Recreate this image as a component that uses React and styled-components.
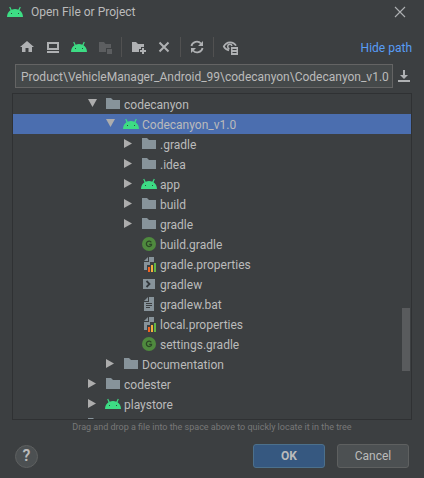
import React, { useState } from "react";
import styled, { createGlobalStyle } from "styled-components";

const Global = createGlobalStyle`
  *, *::before, *::after { box-sizing: border-box; }
  html, body { margin: 0; height: 100%; background: #3c3f41; }
  #root { height: 100%; }
  body, button, input { font-family: Roboto, "Noto Sans", sans-serif; font-size: 12px; }
`;

const Dialog = styled.main`
  display: flex;
  flex-direction: column;
  height: 100vh;
  color: #bbbbbb;
  background: #3c3f41;
  line-height: 20px;
  overflow: hidden;
`;

const TitleBar = styled.header`
  display: flex;
  align-items: center;
  gap: 8px;
  flex: none;
  height: 24px;
  padding: 0 16px 0 7px;
`;

const Title = styled.h1`
  flex: 1;
  margin: 0;
  font-size: 12px;
  font-weight: 400;
`;

const IconButton = styled.button`
  display: flex;
  align-items: center;
  justify-content: center;
  width: ${(p) => (p.$compact ? "16px" : "26px")};
  height: ${(p) => (p.$compact ? "16px" : "26px")};
  flex: none;
  padding: 0;
  border: 0;
  background: none;
  color: #afb1b3;
  &:disabled { color: #5c5e60; }
`;

const Toolbar = styled.div`
  display: flex;
  align-items: center;
  flex: none;
  height: 40px;
  padding: 6px 12px 0 14px;
`;

const Separator = styled.span`
  width: 1px;
  height: 20px;
  margin: 0 3px;
  background: #515151;
`;

const PathLink = styled.a`
  margin-left: auto;
  padding-top: 2px;
  color: #589df6;
  text-decoration: none;
`;

const PathRow = styled.div`
  display: flex;
  align-items: center;
  gap: 3px;
  flex: none;
  padding: 0 12px 0 15px;
`;

const PathInput = styled.input`
  flex: 1;
  min-width: 0;
  height: 24px;
  padding: 1px 2px 0 5px;
  border: 1px solid #646464;
  background: #45494a;
  color: #bbbbbb;
  outline: none;
`;

const TreePanel = styled.section`
  position: relative;
  flex: 1;
  min-height: 0;
  margin: 5px 12px 0;
  border: 1px solid #2f3133;
  overflow: hidden;
`;

const TreeList = styled.ul`
  margin: 0;
  padding: 0;
  list-style: none;
`;

const TreeRow = styled.li`
  display: flex;
  align-items: center;
  height: 20px;
  padding-left: ${(p) => 74 + p.$level * 18}px;
  background: ${(p) => (p.$selected ? "#4b6eaf" : "transparent")};
  white-space: nowrap;
`;

const ArrowSlot = styled.span`
  display: flex;
  align-items: center;
  width: 18px;
  height: 16px;
`;

const RowLabel = styled.span`
  margin-left: 3px;
  padding-top: 2px;
`;

const ScrollThumb = styled.div`
  position: absolute;
  right: 1px;
  bottom: 48px;
  width: 8px;
  height: 63px;
  background: #595b5d;
`;

const Hint = styled.p`
  flex: none;
  margin: 0;
  color: #787878;
  font-size: 9px;
  line-height: 14px;
  text-align: center;
`;

const Footer = styled.footer`
  display: flex;
  align-items: center;
  gap: 12px;
  flex: none;
  padding: 10px 15px;
`;

const HelpButton = styled.button`
  width: 23px;
  height: 23px;
  margin-right: auto;
  padding: 0;
  border: 1px solid #5e6060;
  border-radius: 50%;
  background: #4c5052;
  color: #bbbbbb;
  font-size: 16px;
  font-weight: 600;
  line-height: 20px;
`;

const ActionButton = styled.button`
  width: 72px;
  height: 24px;
  padding: 0;
  border: 1px solid ${(p) => (p.$primary ? "#4c708c" : "#5e6060")};
  border-radius: 3px;
  background: ${(p) => (p.$primary ? "#365880" : "#4c5052")};
  color: #bbbbbb;
  font-weight: ${(p) => (p.$primary ? 700 : 400)};
`;

const Icon = ({ children }) => (
  <svg width="16" height="16" viewBox="0 0 16 16" fill="currentColor" aria-hidden="true">
    {children}
  </svg>
);

const AndroidIcon = () => (
  <Icon>
    <path fill="#3ddc84" d="M0 13c.1-3 1.300-5.300 3.500-6.700L2.200 3.300l1-.5L4.700 5.700c2-.9 4.600-.9 6.600 0l1.500-2.900 1 .5-1.300 3C14.700 7.700 15.900 10 16 13z" />
    <path fill="#2c4a3b" d="M4 9h1v1H4zM11 9h1v1h-1z" />
  </Icon>
);

const FolderIcon = () => (
  <Icon>
    <path fill="#87939a" d="M1 2h5l2 2h7v9H1z" />
  </Icon>
);

const GradleIcon = () => (
  <Icon>
    <circle cx="8" cy="8" r="7" fill="#4f8a3e" />
    <path fill="none" stroke="#2b4526" strokeWidth="1.300" d="M10.300 6.300A2.700 2.700 0 1 0 10.500 9V8.300H8.200" />
  </Icon>
);

const PropertiesIcon = () => (
  <Icon>
    <path fill="#87939a" d="M8 1h5v5h-4v3H6v5H3V6h5z" />
    <path fill="#87939a" d="M7 1v4H3z" />
    <path fill="#f26522" d="M7 11h2v5H7z" />
    <path fill="#f4af3d" d="M10 9h2v7h-2z" />
    <path fill="#62b543" d="M13 7h2v9h-2z" />
  </Icon>
);

const ScriptIcon = () => (
  <Icon>
    <path fill="#87939a" d="M2 3h12v10H2z" />
    <path fill="none" stroke="#33383c" strokeWidth="1.800" d="M5.500 5l3 3-3 3" />
  </Icon>
);

const TextIcon = () => (
  <Icon>
    <path fill="#87939a" d="M8 1h5v14H3V6h5zM7 1v4H3z" />
    <path fill="#3c3f41" d="M5 7h6v1H5zM5 9h6v1H5zM5 11h4v1H5z" />
  </Icon>
);

const HomeIcon = () => (
  <Icon>
    <path d="M8 2l7 6h-2v5H9.500V9h-3v4H3V8H1z" />
  </Icon>
);

const DesktopIcon = () => (
  <Icon>
    <path fillRule="evenodd" d="M2 3h12v8H2zM4 5v4h8V5zM2 12h12v2H2z" />
  </Icon>
);

const ModuleIcon = () => (
  <Icon>
    <path d="M2 3h5l1.500 2H14v4H9v4H2zM10 10h5v5h-5z" />
  </Icon>
);

const NewFolderIcon = () => (
  <Icon>
    <path d="M2 3h4l2 2h6v3h-3v2H9v3H2zM12 9h2v2h2v2h-2v2h-2v-2h-2v-2h2z" />
  </Icon>
);

const DeleteIcon = () => (
  <Icon>
    <path fill="none" stroke="currentColor" strokeWidth="2" d="M3.500 3.500l9 9M12.500 3.500l-9 9" />
  </Icon>
);

const RefreshIcon = () => (
  <Icon>
    <path fill="none" stroke="currentColor" strokeWidth="1.800" d="M13.600 9A5.600 5.600 0 0 1 4 11.500M2.400 7A5.600 5.600 0 0 1 12 4.500" />
    <path d="M2 14V9h5zM14 2v5H9z" />
  </Icon>
);

const ShowHiddenIcon = () => (
  <Icon>
    <path fill="none" stroke="currentColor" strokeWidth="1.800" d="M7 11.300C4.500 10.800 2.500 9.300 1.800 7.500 3 5 5.300 3.300 8 3.300s5 1.500 6 3.400" />
    <path fill="none" stroke="currentColor" strokeWidth="1.500" d="M7.500 9.700a2.200 2.200 0 1 1 2.500-2.700" />
    <path fillRule="evenodd" d="M9 8h7v8H9zM10.500 10v1h4v-1zM10.500 13v1h4v-1z" />
  </Icon>
);

const CloseIcon = () => (
  <Icon>
    <path fill="none" stroke="currentColor" strokeWidth="1.100" d="M3 3l10 10M13 3L3 13" />
  </Icon>
);

const HistoryIcon = () => (
  <Icon>
    <path d="M7 2h2v5h3l-4 4-4-4h3zM2 12h12v2H2z" />
  </Icon>
);

const Arrow = ({ open }) => (
  <Icon>
    <path fill="#adadad" d={open ? "M1 3h9l-4.500 8z" : "M1 3l8 4.500L1 12z"} />
  </Icon>
);

const icons = {
  folder: FolderIcon,
  android: AndroidIcon,
  gradle: GradleIcon,
  properties: PropertiesIcon,
  script: ScriptIcon,
  text: TextIcon,
};

const rows = [
  { name: "codecanyon", level: 0, icon: "folder", open: true },
  { name: "Codecanyon_v1.0", level: 1, icon: "android", open: true, selected: true },
  { name: ".gradle", level: 2, icon: "folder", open: false },
  { name: ".idea", level: 2, icon: "folder", open: false },
  { name: "app", level: 2, icon: "android", open: false },
  { name: "build", level: 2, icon: "folder", open: false },
  { name: "gradle", level: 2, icon: "folder", open: false },
  { name: "build.gradle", level: 2, icon: "gradle" },
  { name: "gradle.properties", level: 2, icon: "properties" },
  { name: "gradlew", level: 2, icon: "script" },
  { name: "gradlew.bat", level: 2, icon: "text" },
  { name: "local.properties", level: 2, icon: "properties" },
  { name: "settings.gradle", level: 2, icon: "gradle" },
  { name: "Documentation", level: 1, icon: "folder", open: false },
  { name: "codester", level: 0, icon: "folder", open: false },
  { name: "playstore", level: 0, icon: "android", open: false },
  { name: "", level: -1, icon: "folder" },
];

const FileRow = ({ row }) => {
  const Glyph = icons[row.icon];
  return (
    <TreeRow
      role="treeitem"
      aria-level={row.level + 2}
      aria-expanded={row.open}
      aria-selected={Boolean(row.selected)}
      $level={row.level}
      $selected={row.selected}
    >
      <ArrowSlot>{row.open !== undefined && <Arrow open={row.open} />}</ArrowSlot>
      <Glyph />
      <RowLabel>{row.name}</RowLabel>
    </TreeRow>
  );
};

export default function App() {
  const [path, setPath] = useState("Product\\VehicleManager_Android_99\\codecanyon\\Codecanyon_v1.0");
  return (
    <>
      <Global />
      <Dialog>
        <TitleBar>
          <AndroidIcon />
          <Title>Open File or Project</Title>
          <IconButton $compact aria-label="Close"><CloseIcon /></IconButton>
        </TitleBar>
        <Toolbar>
          <IconButton aria-label="Home"><HomeIcon /></IconButton>
          <IconButton aria-label="Desktop"><DesktopIcon /></IconButton>
          <IconButton aria-label="Android projects"><AndroidIcon /></IconButton>
          <IconButton aria-label="Module directory" disabled><ModuleIcon /></IconButton>
          <Separator />
          <IconButton aria-label="New folder"><NewFolderIcon /></IconButton>
          <IconButton aria-label="Delete"><DeleteIcon /></IconButton>
          <Separator />
          <IconButton aria-label="Refresh"><RefreshIcon /></IconButton>
          <Separator />
          <IconButton aria-label="Show hidden files"><ShowHiddenIcon /></IconButton>
          <PathLink href="#path">Hide path</PathLink>
        </Toolbar>
        <PathRow>
          <PathInput id="path" aria-label="Path" value={path} onChange={(e) => setPath(e.target.value)} />
          <IconButton $compact aria-label="Recent paths"><HistoryIcon /></IconButton>
        </PathRow>
        <TreePanel>
          <TreeList role="tree" aria-label="Files">
            {rows.map((row) => <FileRow key={row.name} row={row} />)}
          </TreeList>
          <ScrollThumb />
        </TreePanel>
        <Hint>Drag and drop a file into the space above to quickly locate it in the tree</Hint>
        <Footer>
          <HelpButton aria-label="Help">?</HelpButton>
          <ActionButton $primary>OK</ActionButton>
          <ActionButton>Cancel</ActionButton>
        </Footer>
      </Dialog>
    </>
  );
}
